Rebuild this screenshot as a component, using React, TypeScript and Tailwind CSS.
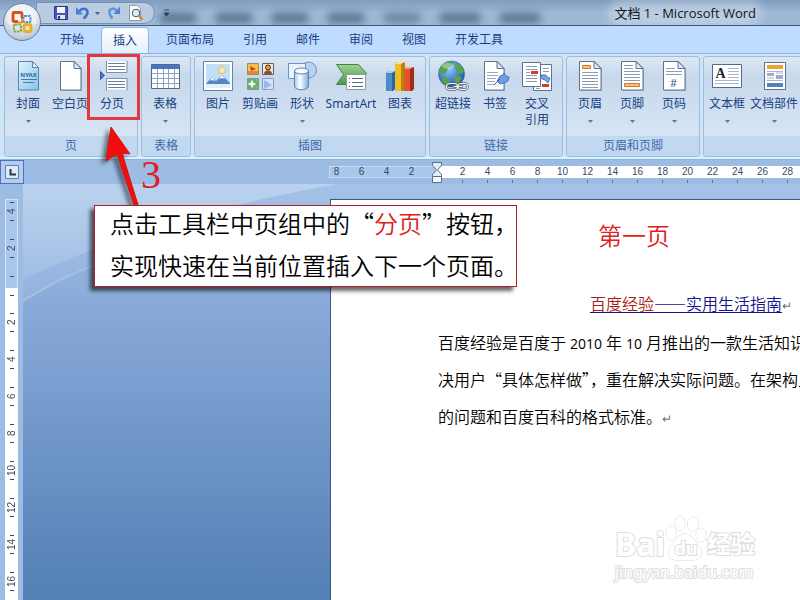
import type { ReactNode } from 'react';

const tabs = ['开始', '插入', '页面布局', '引用', '邮件', '审阅', '视图', '开发工具'];

const leftMarks = [8, 6, 4, 2];
const rightMarks = [2, 4, 6, 8, 10, 12, 14, 16, 18, 20, 22, 24, 26, 28];
const downMarks = [2, 4, 6, 8, 10, 12, 14, 16];

function Sheet({ children, x = 5, w = 22 }: { children?: ReactNode; x?: number; w?: number }) {
  return (
    <>
      <path d={`M${x + 1} 3h${w - 6}l6 6v22h-${w}z`} fill="#5b6b85" opacity=".35" />
      <path d={`M${x + 0.5} 1.500h${w - 7}l6.500 7v21.500h-${w - 0.5}z`} fill="#fff" stroke="#5f7391" />
      <path d={`M${x + w - 7} 1.500v7h7z`} fill="#dfe8f5" stroke="#5f7391" strokeLinejoin="round" />
      {children}
    </>
  );
}

const icons: Record<string, ReactNode> = {
  cover: (
    <>
      <path d="M6.500 1.500h14l6 6v22.500h-20z" fill="url(#cover)" stroke="#4f86b0" />
      <path d="M20.500 1.500v6h6z" fill="#eaf6fd" stroke="#4f86b0" />
      <text x="16.500" y="17" textAnchor="middle" fontSize="6" fontWeight="bold" fill="#2a6798">NYAX</text>
      <path d="M9 19.500h16M11 22.500h11" stroke="#3c7fae" />
    </>
  ),
  blank: <Sheet x={6} w={21} />,
  pageBreak: (
    <>
      <path d="M10.500 1.500h20v11h-20zM10.500 18.500h20v11h-20z" fill="#fff" />
      <path d="M10.500 1v11.500h20.500V1M10.500 30.500v-12h20.500v12" fill="none" stroke="#7c8ea8" />
      <path d="M12 3.500h17M12 6.500h17M12 9.500h17M12 21.500h17M12 24.500h17M12 27.500h17" stroke="#6d7b94" />
      <path d="M4.500 11.500l4 4-4 4z" fill="#4d7ed3" stroke="#2b58ad" />
    </>
  ),
  table: (
    <>
      <path d="M2.500 4.500h28v24h-28z" fill="#fff" stroke="#53688c" />
      <path d="M3 5h27v4H3z" fill="#4476c8" />
      <path d="M3 13.500h27M3 18.500h27M3 23.500h27M8.500 9v19M14.500 9v19M19.500 9v19M25.500 9v19" stroke="#8fa3c4" />
    </>
  ),
  picture: (
    <>
      <path d="M1.500 1.500h29v29h-29z" fill="#fff" stroke="#6484ad" />
      <path d="M4 4h24v20H4z" fill="#bfe0f6" />
      <circle cx="20" cy="10" r="3.500" fill="#fbe5b8" stroke="#edb768" />
      <path d="M4 24l6-7 4 4 6-6 8 8v1z" fill="#5585bd" />
      <path d="M10 17l3 4-3-1-2 1zM20 15l3 4-3-1-3 1z" fill="#fff" />
      <path d="M4 24h24v4H4z" fill="#e2eefa" />
    </>
  ),
  clipart: (
    <>
      <path d="M3.500 3.500h11v11h-11z" fill="#f6c344" stroke="#9a8c62" />
      <path d="M4 11h10v3H4z" fill="#e58a2f" />
      <path d="M6 6l6 3-5 2z" fill="#cf3e25" />
      <path d="M18.500 3.500h11v11h-11z" fill="#f7e6c6" stroke="#5e6273" />
      <circle cx="24" cy="7.500" r="2.500" fill="#d99a62" stroke="#43302a" />
      <path d="M20 14c0-5 8-5 8 0z" fill="#8e4f2f" />
      <path d="M3.500 18.500h11v11h-11z" fill="#65b266" stroke="#8397a5" />
      <path d="M8 20l1.200 2.800L12 24l-2.800 1.200L8 28l-1.200-2.800L4 24l2.800-1.200zM12 19l1 2M11 28l2-1" fill="#fff" stroke="#d5f3d4" strokeWidth=".5" />
      <path d="M18.500 18.500h11v11h-11z" fill="#d6e2fa" stroke="#8a9cc6" />
      <path d="M20 20l8 5-8 4z" fill="#9bb7ee" />
    </>
  ),
  shapes: (
    <>
      <circle cx="22.500" cy="10" r="8" fill="#b7d2ef" stroke="#6b93c6" />
      <path d="M2.500 3.500h17v15h-17z" fill="#e9f3fd" stroke="#6b93c6" />
      <path d="M8.500 11v15c0 5 14 5 14 0V11z" fill="url(#steel)" stroke="#5a83b8" />
      <ellipse cx="15.500" cy="11" rx="7" ry="3" fill="#f4f9ff" stroke="#5a83b8" />
    </>
  ),
  smartart: (
    <>
      <path d="M1.500 4.500h22l8 9-8 11h-22l7-10z" fill="url(#leaf)" stroke="#438342" />
      <path d="M11.500 14.500h19v15h-19z" fill="#fff" stroke="#8c99a8" />
      <path d="M17 18.500h11M17 22.500h11M17 26.500h11M14 18.500h1M14 22.500h1M14 26.500h1" stroke="#59677a" />
    </>
  ),
  chart: (
    <>
      <path d="M2 13l3-2h6v18l-2 2H2z" fill="#2b65a7" />
      <path d="M2 13h6v18H2z" fill="#4b8ccd" />
      <path d="M2 13l3-2h6l-3 2z" fill="#a4cdf0" />
      <path d="M11 4l3-2h7v27l-2 2h-8z" fill="#b88408" />
      <path d="M11 4h6v27h-6z" fill="#f0be23" />
      <path d="M11 4l3-2h7l-4 2z" fill="#fae48c" />
      <path d="M20 9l3-2h7v22l-2 2h-8z" fill="#a32c16" />
      <path d="M20 9h6v22h-6z" fill="#e0532e" />
      <path d="M20 9l3-2h7l-4 2z" fill="#f6a37e" />
    </>
  ),
  link: (
    <>
      <circle cx="14.500" cy="14" r="13" fill="url(#globe)" stroke="#2a5da8" strokeWidth=".6" />
      <path d="M5 6c3-4 7-5 11-4l-1 4-4 2-2 5-5 1-2-2zM18 5l5-1 4 7-2 3-5-2-2-4zM6 17l5 1 2 4-3 4-5-4zM17 17l5-1 3 2-3 5-4 1z" fill="#55a545" />
      <ellipse cx="11" cy="6" rx="6" ry="3" fill="#fff" opacity=".35" />
      <g fill="none" strokeLinecap="round">
        <path d="M12.500 23.500h5a3 3 0 010 6h-5a3 3 0 010-6zM24 23.500h3.500a3 3 0 010 6H24a3 3 0 010-6zM17 26.500h8" stroke="#58616c" strokeWidth="2.600" />
        <path d="M12.500 23.500h5a3 3 0 010 6h-5a3 3 0 010-6zM24 23.500h3.500a3 3 0 010 6H24a3 3 0 010-6zM17 26.500h8" stroke="#eef1f4" strokeWidth="1.200" />
      </g>
    </>
  ),
  bookmark: (
    <Sheet x={5} w={20}>
      <path d="M8 12.500h11M8 15.500h11M8 18.500h9M8 21.500h8M8 24.500h7" stroke="#9aa8bf" />
      <path d="M18 21l3-5 3-1 1-2 2 3 3 1-1 4-4 2-4 1z" fill="#6f9ce3" stroke="#3464b8" strokeWidth=".8" />
      <path d="M15 25l6-6" stroke="#3b5d94" />
    </Sheet>
  ),
  crossref: (
    <>
      <path d="M12.500 4.500h18v26h-18z" fill="#fff" stroke="#5f7391" />
      <path d="M1.500 2.500h18v24h-18z" fill="#fff" stroke="#5f7391" />
      <path d="M5 6.500h11M5 9.500h11M5 12.500h4M5 15.500h11M5 18.500h11M5 21.500h11M22 8.500h6M22 11.500h6M15 28.500h4" stroke="#8d9cb6" />
      <path d="M10 11h7v3h-7zM21 24h7v3h-7z" fill="#c5432a" />
      <path d="M20 15h5l1 2 3 1-2 5-3-3-3-1z" fill="#7da4e2" stroke="#3464b8" strokeWidth=".8" />
    </>
  ),
  header: (
    <Sheet>
      <path d="M8 12.500h16M8 15.500h16M8 18.500h16M8 21.500h16M8 24.500h16M8 27.500h16" stroke="#8d9cb6" />
      <path d="M8.500 5.500h8v3h-8z" fill="#f9c27a" stroke="#d57a1c" />
    </Sheet>
  ),
  footer: (
    <Sheet>
      <path d="M8 5.500h9M8 8.500h9M8 11.500h16M8 14.500h16M8 17.500h16M8 20.500h16" stroke="#8d9cb6" />
      <path d="M8.500 23.500h15v3h-15z" fill="#f9c27a" stroke="#d57a1c" />
    </Sheet>
  ),
  number: (
    <Sheet>
      <path d="M8 8.500h9M8 11.500h16M8 14.500h16" stroke="#8d9cb6" />
      <text x="15.500" y="27" textAnchor="middle" fontSize="11" fill="#3b639e">#</text>
    </Sheet>
  ),
  textbox: (
    <>
      <path d="M1.500 4.500h29v23h-29z" fill="#fff" stroke="#4f6c96" />
      <text x="9.500" y="17.500" textAnchor="middle" fontSize="14" fontWeight="bold" fontFamily="Liberation Serif" fill="#1b2430">A</text>
      <path d="M17 8.500h11M17 11.500h11M17 14.500h11M17 17.500h11M4 20.500h24M4 23.500h24" stroke="#a9b6cb" />
    </>
  ),
  parts: (
    <>
      <path d="M6.500 2.500h21v27h-21z" fill="#fff" stroke="#5f7391" />
      <path d="M9 5h16v4H9z" fill="#f0a136" />
      <path d="M9 11.500h16M9 20.500h16" stroke="#a9b6cb" />
      <path d="M9 13h7v3H9zM18 15h7v4h-7z" fill="#9caecb" />
      <path d="M9 18h7M18 13h7" stroke="#a9b6cb" />
      <path d="M9 23h16v4H9z" fill="#5380c2" />
    </>
  ),
};

type Item = { icon: string; label: string; menu?: boolean; wide?: string };

const groups: { name: string; size: string; items: Item[] }[] = [
  {
    name: '页',
    size: 'w-[134px]',
    items: [
      { icon: 'cover', label: '封面', menu: true },
      { icon: 'blank', label: '空白页' },
      { icon: 'pageBreak', label: '分页' },
    ],
  },
  { name: '表格', size: 'w-[50px]', items: [{ icon: 'table', label: '表格', menu: true }] },
  {
    name: '插图',
    size: 'w-[232px]',
    items: [
      { icon: 'picture', label: '图片' },
      { icon: 'clipart', label: '剪贴画' },
      { icon: 'shapes', label: '形状', menu: true },
      { icon: 'smartart', label: 'SmartArt', wide: 'w-[56px]' },
      { icon: 'chart', label: '图表' },
    ],
  },
  {
    name: '链接',
    size: 'w-[134px]',
    items: [
      { icon: 'link', label: '超链接' },
      { icon: 'bookmark', label: '书签' },
      { icon: 'crossref', label: '交叉 引用' },
    ],
  },
  {
    name: '页眉和页脚',
    size: 'w-[134px]',
    items: [
      { icon: 'header', label: '页眉', menu: true },
      { icon: 'footer', label: '页脚', menu: true },
      { icon: 'number', label: '页码', menu: true },
    ],
  },
  {
    name: '',
    size: 'w-[260px]',
    items: [
      { icon: 'textbox', label: '文本框', menu: true },
      { icon: 'parts', label: '文档部件', menu: true, wide: 'w-[52px]' },
    ],
  },
];

function Gradients() {
  return (
    <svg className="absolute size-0" aria-hidden="true">
      <defs>
        <linearGradient id="cover" x1="0" y1="0" x2="1" y2="1">
          <stop offset="0" stopColor="#e3f4fd" />
          <stop offset="1" stopColor="#86c3e8" />
        </linearGradient>
        <linearGradient id="steel">
          <stop offset="0" stopColor="#a9caee" />
          <stop offset=".4" stopColor="#fff" />
          <stop offset="1" stopColor="#7fabdf" />
        </linearGradient>
        <linearGradient id="leaf" x1="0" y1="0" x2="0" y2="1">
          <stop offset="0" stopColor="#9ad391" />
          <stop offset="1" stopColor="#4c9a4b" />
        </linearGradient>
        <radialGradient id="globe" cx=".4" cy=".3" r=".7">
          <stop offset="0" stopColor="#8ecbff" />
          <stop offset="1" stopColor="#1c55b4" />
        </radialGradient>
      </defs>
    </svg>
  );
}

function RibbonButton({ item }: { item: Item }) {
  return (
    <button type="button" className={`${item.wide ?? 'w-[42px]'} flex shrink-0 flex-col items-center`}>
      <svg viewBox="0 0 32 32" className="size-8" fill="none" aria-hidden="true">{icons[item.icon]}</svg>
      <span className="mt-1 flex flex-col items-center whitespace-nowrap text-xs leading-4 text-[#17407f]">
        {item.label.split(' ').map((line) => <span key={line}>{line}</span>)}
      </span>
      {item.menu && (
        <svg viewBox="0 0 5 3" className="mt-2 h-[3px] w-[5px]" aria-hidden="true"><path d="M0 0h5L2.500 3z" fill="#56779f" /></svg>
      )}
    </button>
  );
}

function OfficeButton() {
  return (
    <button type="button" aria-label="Office" className="absolute left-0.5 top-0.5 z-10 size-10">
      <svg viewBox="0 0 40 40" className="size-10">
        <defs>
          <radialGradient id="orb" cx=".5" cy=".35" r=".65">
            <stop offset="0" stopColor="#fff" />
            <stop offset=".6" stopColor="#e9edf3" />
            <stop offset="1" stopColor="#a6b4c8" />
          </radialGradient>
        </defs>
        <circle cx="20" cy="20" r="18.500" fill="url(#orb)" stroke="#6c7f9c" />
        <path d="M3 21c6 3 28 3 34 0 0 22-34 22-34 0z" fill="#c9d4e3" opacity=".5" />
        <g fill="none" strokeLinejoin="round">
          <rect x="21.500" y="14" width="7" height="6" rx="1" stroke="#4a90d6" strokeWidth="2" strokeDasharray="2.500 .8" />
          <rect x="12" y="22.500" width="7" height="7" rx="1" stroke="#7fb03f" strokeWidth="2" strokeDasharray="2.500 .8" />
          <rect x="22" y="22.500" width="7" height="7" rx="1.500" stroke="#f2ad1d" strokeWidth="2.800" />
          <path d="M16 19.500h-3.500q-1.500 0-1.500-1.500v-6q0-1.500 1.500-1.500h6q1.500 0 1.500 1.500v4" stroke="#dc4f1c" strokeWidth="2.800" />
          <path d="M20 16v4.500h-4" stroke="#ec8a31" strokeWidth="2" />
        </g>
      </svg>
    </button>
  );
}

function QuickAccess() {
  return (
    <div className="ml-9 flex h-[22px] w-[119px] shrink-0 items-center rounded-r-full border border-[#7690b3] bg-[#b9cce2] pl-4">
      <button type="button" aria-label="保存" className="size-4">
        <svg viewBox="0 0 16 16" className="size-4">
          <path d="M1.500 1.500h13v13h-12l-1-1z" fill="#4b55b4" stroke="#2d3586" />
          <path d="M4 2h8v6H4z" fill="#f4f6fc" />
          <path d="M4 10h8v4H4z" fill="#dfe4f2" />
          <path d="M5 11h2v3H5z" fill="#2d3586" />
        </svg>
      </button>
      <button type="button" aria-label="撤消" className="ml-1.5 size-4">
        <svg viewBox="0 0 16 16" className="size-4" fill="none">
          <path d="M4 6.500c4-5 9-2.500 8.500 1.500-.3 2.500-2 4-4 5.500" stroke="#3b72c8" strokeWidth="2.500" />
          <path d="M1 2v7.500h7z" fill="#4a83d8" />
        </svg>
      </button>
      <svg viewBox="0 0 5 3" className="ml-1 h-[3px] w-[5px]" aria-hidden="true"><path d="M0 0h5L2.500 3z" fill="#3f5f8c" /></svg>
      <button type="button" aria-label="恢复" className="ml-1.5 size-4">
        <svg viewBox="0 0 16 16" className="size-4" fill="none">
          <path d="M11 6C7 1.500 3 4 3.500 8c.3 2.500 1 3.500 3 5.500" stroke="#5f94dc" strokeWidth="2.500" />
          <path d="M14 1.500V9H7.500z" fill="#4a83d8" />
        </svg>
      </button>
      <button type="button" aria-label="打印预览" className="ml-1.5 size-4">
        <svg viewBox="0 0 16 16" className="size-4">
          <path d="M1.500.500h8l3 3v12h-11z" fill="#fff" stroke="#8b98ad" />
          <circle cx="8" cy="8" r="3.800" fill="#dcecf9" stroke="#4b5664" />
          <path d="M11 11l3.500 3.500" stroke="#c98b34" strokeWidth="2.500" />
        </svg>
      </button>
    </div>
  );
}

function TitleBar() {
  return (
    <header className="relative flex h-[26px] shrink-0 items-center overflow-hidden border-b border-[#3f5873] bg-linear-to-b from-[#7f9cbf] via-[#9db8d5] to-[#9cb9d8] pt-px">
      <div className="absolute inset-y-0 left-[160px] flex items-center gap-5 pt-2.5 blur-[4px]" aria-hidden="true">
        <i className="h-2.5 w-9 bg-[#54708f]" />
        <i className="h-2.5 w-9 bg-[#54708f]" />
        <i className="h-2.5 w-9 bg-[#54708f]" />
        <i className="h-2.5 w-9 bg-[#54708f]" />
        <i className="h-2.5 w-9 bg-[#6681a0]" />
        <i className="h-2.5 w-10 bg-[#54708f]" />
        <i className="h-2.5 w-10 bg-[#54708f]" />
      </div>
      <QuickAccess />
      <button type="button" aria-label="自定义快速访问工具栏" className="relative ml-2 h-2 w-[7px] shrink-0">
        <svg viewBox="0 0 7 8" className="h-2 w-[7px]"><path d="M1 1h5M1 4h5L3.500 7z" fill="#1f3d66" stroke="#1f3d66" strokeWidth=".8" /></svg>
      </button>
      <h1 className="relative ml-auto mr-11 whitespace-nowrap rounded-full bg-white/30 font-['Open_Sans','Noto_Sans_CJK_SC',sans-serif] text-[13px] leading-4 text-[#10151c] shadow-[0_0_8px_6px_rgba(255,255,255,0.3)]">
        文档 1 - Microsoft Word
      </h1>
    </header>
  );
}

function TabBar() {
  return (
    <nav className="flex h-[27px] shrink-0 items-end gap-[5px] bg-[#bfdbff] pl-12 text-xs text-[#17407f]">
      {tabs.map((tab) => (
        <button
          key={tab}
          type="button"
          className={
            tab === '插入'
              ? 'h-[26px] rounded-t-[4px] border border-b-0 border-[#8db2e3] bg-linear-to-b from-white to-[#e3effb] px-[11px]'
              : 'h-[26px] px-3'
          }
        >
          {tab}
        </button>
      ))}
    </nav>
  );
}

function Ribbon() {
  return (
    <section className="flex h-[107px] shrink-0 gap-[3px] overflow-hidden border-y border-[#8db2e3] bg-[#d0e4f8] pl-1 pt-0.5 pb-0.5 shadow-[inset_0_-2px_0_#d4f4fb]">
      {groups.map((group) => (
        <div key={group.size + group.name} className={`${group.size} flex shrink-0 flex-col overflow-hidden rounded-[3px] border border-[#9fbcdb] bg-linear-to-b from-[#dde8f4] via-[#c7d8ec] via-20% to-[#dbe9f7]`}>
          <div className="flex flex-1 px-0.5 pt-[3px]">
            {group.items.map((item) => <RibbonButton key={item.label} item={item} />)}
          </div>
          <div className="h-5 bg-[#c1d8f0] text-center text-xs leading-5 text-[#3e6aaa]">{group.name}</div>
        </div>
      ))}
    </section>
  );
}

function TopRuler() {
  return (
    <div className="flex h-6 shrink-0 bg-[#9dbce3] font-['Liberation_Sans',sans-serif] text-[10px] leading-3 text-[#3b4a60]">
      <button type="button" aria-label="制表符" className="flex size-6 items-center justify-center border border-[#4a72b8] bg-[#b3cdee]">
        <svg viewBox="0 0 14 14" className="size-3.5">
          <path d="M.5.5h13v13H.5z" fill="#dfebf9" stroke="#6081b5" />
          <path d="M5.500 4v5.500H11" fill="none" stroke="#26364f" strokeWidth="2" />
        </svg>
      </button>
      <div className="relative ml-[305px] flex flex-1 overflow-hidden pt-1.5">
        <div className="flex h-3 w-[108px] shrink-0 justify-end border border-[#c6daf3] bg-[#aac6ea] pr-3 leading-[10px]">
          {leftMarks.map((n) => <span key={n} className="w-[25px] shrink-0 text-center">{n}</span>)}
        </div>
        <div className="flex h-3 flex-1 bg-white pl-[13px]">
          {rightMarks.map((n) => (
            <span key={n} className="flex w-[25px] shrink-0 flex-col items-center">
              {n}
              <i className="mt-0.5 h-[3px] w-px shrink-0 bg-[#5c7395]" />
            </span>
          ))}
        </div>
        <svg viewBox="0 0 10 22" className="absolute left-[103px] top-0.5 h-[22px] w-2.5" aria-hidden="true">
          <path d="M.5.5h9v3L5.500 8l4 4.500v2h-9v-2l4-4.500-4-4.500z" fill="#e6edf2" stroke="#56708c" />
          <path d="M.5 14.500h9v6h-9z" fill="#f4f8fb" stroke="#56708c" />
        </svg>
      </div>
    </div>
  );
}

function DownMark({ n }: { n: number }) {
  return (
    <span className="flex h-[37px] shrink-0 flex-col items-center py-[9px]">
      <i className="h-px w-1 shrink-0 bg-[#3b4a60]" />
      <span className="flex min-h-0 flex-1 rotate-180 items-center justify-center [writing-mode:vertical-rl]">{n}</span>
      <i className="h-px w-1 shrink-0 bg-[#3b4a60]" />
    </span>
  );
}

function SideRuler() {
  return (
    <div className="flex w-[23px] shrink-0 flex-col overflow-hidden bg-[#9dbce3] pl-[5px] pt-[15px] font-['Liberation_Sans',sans-serif] text-[10px] leading-3 text-[#3b4a60]">
      <div className="flex h-[89px] w-[13px] shrink-0 flex-col justify-end overflow-hidden border border-b-0 border-[#d3e3f7] bg-[#aac6ea]">
        <DownMark n={4} />
        <DownMark n={2} />
        <i className="mt-[9px] mb-[11px] h-px w-1 shrink-0 self-center bg-[#3b4a60]" />
      </div>
      <div className="flex w-[13px] flex-1 flex-col overflow-hidden bg-white">
        <i className="mt-[7px] mb-2 h-px w-1 shrink-0 self-center bg-[#3b4a60]" />
        {downMarks.map((n) => <DownMark key={n} n={n} />)}
      </div>
    </div>
  );
}

function DocumentPage() {
  return (
    <article className="ml-[307px] mt-[15px] flex-1 overflow-hidden border-l border-t border-[#3d5878] bg-white pl-[107px] text-base text-black">
      <div className="w-[554px] whitespace-nowrap font-['Noto_Sans_CJK_SC',sans-serif] font-[350] leading-[37px]">
        <h2 className="pl-40 pt-[17px] text-2xl leading-[36px] font-[350] text-[#e0201b]">第一页</h2>
        <p className="pl-[152px] pt-8">
          <a href="#jingyan" className="text-[#14148c] underline underline-offset-2">
            <span className="text-[#a81c1c]">百度经验</span>——实用生活指南
          </a>
          <span className="text-xs text-gray-500">↵</span>
        </p>
        <p className="pt-0.5">
          百度经验是百度于
          <span className="px-1 font-['Open_Sans',sans-serif] text-sm font-normal">2010</span>
          年
          <span className="px-1 font-['Open_Sans',sans-serif] text-sm font-normal">10</span>
          月推出的一款生活知识系统
        </p>
        <p>决用户“具体怎样做”，重在解决实际问题。在架构上</p>
        <p>的问题和百度百科的格式标准。<span className="text-xs text-gray-500">↵</span></p>
      </div>
    </article>
  );
}

function Watermark() {
  return (
    <div className="absolute bottom-[18px] right-[45px] flex flex-col font-['Noto_Sans','Noto_Sans_CJK_SC',sans-serif] text-white [paint-order:stroke_fill] [-webkit-text-stroke:2px_#dedede]">
      <div className="flex items-end">
        <b className="text-[32px] leading-9">Bai</b>
        <span className="relative h-12 w-[42px]">
          <svg viewBox="0 0 42 48" className="h-12 w-[42px]" fill="#fff" stroke="#d8d8d8">
            <ellipse cx="6" cy="19" rx="5" ry="7" />
            <ellipse cx="15" cy="9" rx="5" ry="7.500" />
            <ellipse cx="28" cy="10" rx="5.500" ry="7" />
            <ellipse cx="36" cy="21" rx="5" ry="7" />
            <path d="M20 20c8 0 9 7 14 12 5 6 2 14-6 14-4 0-12 0-16 0-9 0-11-8-6-14 5-5 6-12 14-12z" />
          </svg>
          <b className="absolute inset-x-0 bottom-0.5 text-center text-lg leading-6">du</b>
        </span>
        <b className="text-2xl leading-9">经验</b>
      </div>
      <span className="text-base leading-5">jingyan.baidu.com</span>
    </div>
  );
}

function Callout() {
  return (
    <>
      <div className="absolute left-[87px] top-[54px] h-[66px] w-[53px] border-[3px] border-[#e13a3e]" />
      <svg viewBox="0 0 50 90" className="absolute left-[100px] top-[122px] h-[90px] w-[50px] drop-shadow-[-4px_3px_2px_rgba(0,0,0,0.5)]" aria-hidden="true">
        <path d="M11 5l19 27-8-1 17 55h-4L17 32l-11 7z" fill="#f40d0d" stroke="#d01414" />
      </svg>
      <span className="absolute left-[141px] top-[153px] font-['Liberation_Serif',serif] text-[40px] leading-[44px] text-[#dc1f26]">3</span>
      <div className="absolute left-[94px] top-[205px] w-[423px] whitespace-nowrap border border-[#b01f24] bg-white pl-[15px] font-['Noto_Sans_CJK_SC',sans-serif] text-2xl leading-[42px] font-[350] text-black shadow-[-4px_4px_4px_rgba(0,0,0,0.6)]">
        <p className="-mt-1">点击工具栏中页组中的“<span className="text-[#e0201b]">分页</span>”按钮，</p>
        <p>实现快速在当前位置插入下一个页面。</p>
      </div>
    </>
  );
}

export default function App() {
  return (
    <div lang="zh-CN" className="relative flex h-screen flex-col overflow-hidden font-['Noto_Sans','Noto_Sans_CJK_SC',sans-serif]">
      <Gradients />
      <OfficeButton />
      <TitleBar />
      <TabBar />
      <Ribbon />
      <TopRuler />
      <main className="flex min-h-0 flex-1">
        <SideRuler />
        <div className="relative flex min-w-0 flex-1 bg-linear-to-b from-[#a5c2e8] via-[#84a6d6] via-35% to-[#537fb4]">
          <svg viewBox="0 0 777 416" preserveAspectRatio="none" className="absolute inset-0 size-full" aria-hidden="true">
            <defs>
              <linearGradient id="sweep" x1="0" y1="0" x2="0" y2="1">
                <stop offset="0" stopColor="#c2d8f1" stopOpacity=".7" />
                <stop offset="1" stopColor="#c2d8f1" stopOpacity=".3" />
              </linearGradient>
            </defs>
            <path d="M0 0h315C200 20 80 55 0 96z" fill="url(#sweep)" />
            <path d="M0 96C80 55 100 50 200 25 110 60 60 80 0 118z" fill="#c2d8f1" opacity=".15" />
            <path d="M0 117C30 98 60 84 110 66" stroke="#c2d8f1" strokeOpacity=".4" strokeWidth="2" fill="none" />
          </svg>
          <div className="relative flex min-w-0 flex-1">
            <DocumentPage />
          </div>
        </div>
      </main>
      <Watermark />
      <Callout />
    </div>
  );
}
